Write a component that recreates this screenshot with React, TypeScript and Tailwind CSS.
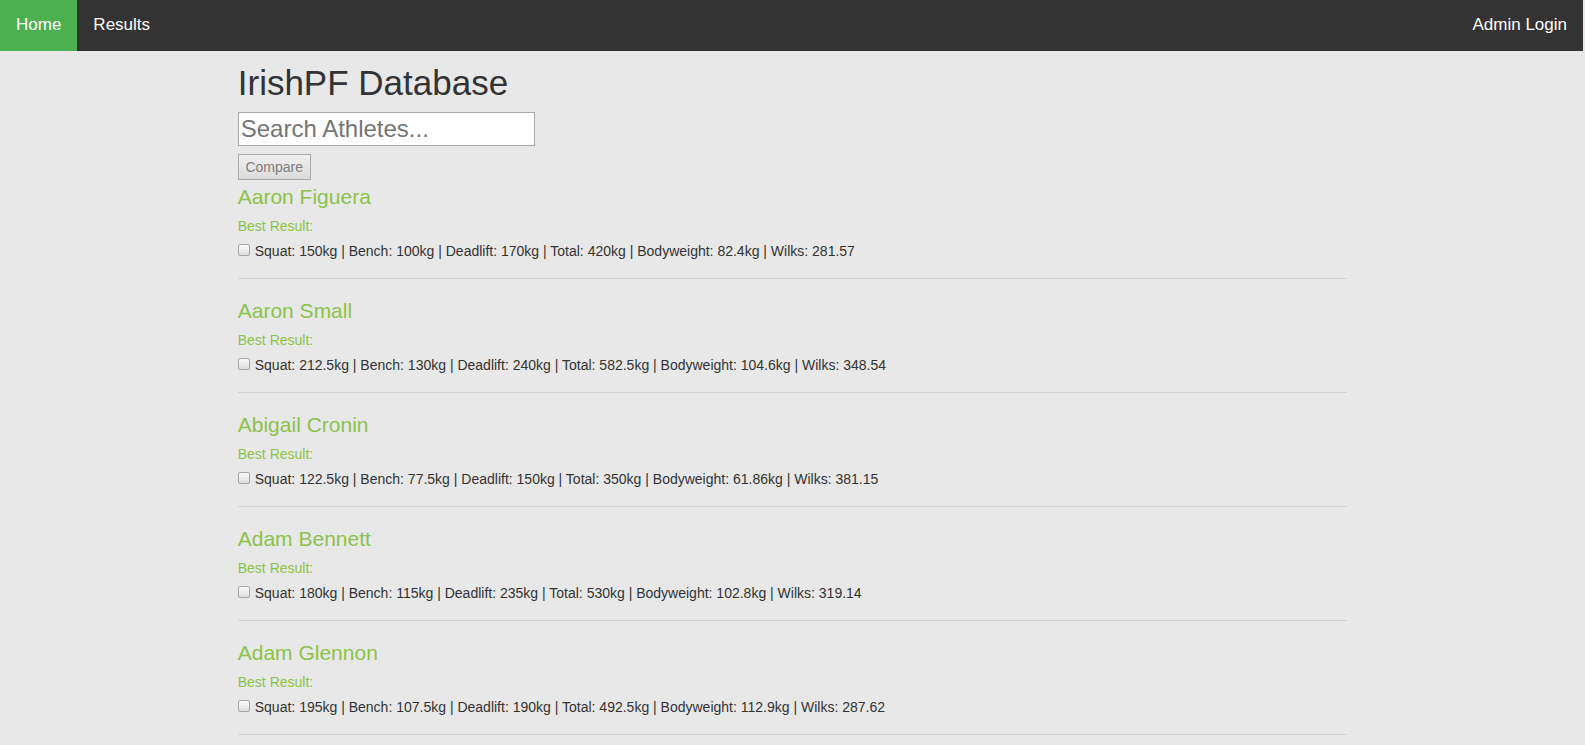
import { useState } from "react";

interface Athlete {
  name: string;
  squat: string;
  bench: string;
  deadlift: string;
  total: string;
  bodyweight: string;
  wilks: string;
}

const athletes: Athlete[] = [
  { name: "Aaron Figuera", squat: "150", bench: "100", deadlift: "170", total: "420", bodyweight: "82.4", wilks: "281.57" },
  { name: "Aaron Small", squat: "212.5", bench: "130", deadlift: "240", total: "582.5", bodyweight: "104.6", wilks: "348.54" },
  { name: "Abigail Cronin", squat: "122.5", bench: "77.5", deadlift: "150", total: "350", bodyweight: "61.86", wilks: "381.15" },
  { name: "Adam Bennett", squat: "180", bench: "115", deadlift: "235", total: "530", bodyweight: "102.8", wilks: "319.14" },
  { name: "Adam Glennon", squat: "195", bench: "107.5", deadlift: "190", total: "492.5", bodyweight: "112.9", wilks: "287.62" },
];

interface AthleteRowProps {
  athlete: Athlete;
  checked: boolean;
  onToggle: () => void;
}

const AthleteRow = ({ athlete, checked, onToggle }: AthleteRowProps) => {
  return (
    <div className="border-b border-[#d2d2d2] pt-[20px] pb-[17px] first:pt-[5px]">
      <h3 className="text-[21px] leading-[24px] text-[#8bc34a]">{athlete.name}</h3>
      <p className="mt-[7px] text-[14px] leading-[20px] text-[#8bc34a]">Best Result:</p>
      <div className="mt-[5px] flex items-start text-[14px] leading-[20px] text-[#333]">
        <input
          type="checkbox"
          checked={checked}
          onChange={onToggle}
          className="mt-[3px] mr-[5px] h-[12px] w-[12px] shrink-0 appearance-none rounded-[2px] border border-[#a6a6a6] bg-linear-to-b from-[#fafafa] to-[#dedede] checked:bg-[#8bc34a]"
        />
        <span>
          Squat: {athlete.squat}kg | Bench: {athlete.bench}kg | Deadlift: {athlete.deadlift}kg | Total:{" "}
          {athlete.total}kg | Bodyweight: {athlete.bodyweight}kg | Wilks: {athlete.wilks}
        </span>
      </div>
    </div>
  );
};

const App = () => {
  const [search, setSearch] = useState<string>("");
  const [selected, setSelected] = useState<string[]>([]);

  const toggle = (name: string) => {
    setSelected((prev) => (prev.includes(name) ? prev.filter((n) => n !== name) : [...prev, name]));
  };

  const filtered = athletes.filter((a) => a.name.toLowerCase().includes(search.toLowerCase()));

  return (
    <div className="min-h-screen bg-[#e8e8e8] font-['Liberation_Sans',Arial,sans-serif]">
      <nav className="mr-[2px] flex h-[51px] bg-[#333]">
        <a href="#" className="block bg-[#4caf50] px-4 pt-[15px] text-[17px] leading-[20px] text-white">
          Home
        </a>
        <a href="#" className="block px-4 pt-[15px] text-[17px] leading-[20px] text-white">
          Results
        </a>
        <a href="#" className="ml-auto block px-4 pt-[15px] text-[17px] leading-[20px] text-white">
          Admin Login
        </a>
      </nav>

      <main className="mx-auto w-[70%]">
        <h1 className="pt-[12px] text-[35px] leading-[40px] text-[#333]">IrishPF Database</h1>
        <input
          type="text"
          value={search}
          onChange={(e) => setSearch(e.target.value)}
          placeholder="Search Athletes..."
          className="mt-[9px] block h-[34px] w-[297px] border border-[#a9a9a9] bg-white px-[2px] text-[24px] text-[#333] outline-none placeholder:text-[#757575]"
        />
        <button
          type="button"
          className="mt-[8px] block h-[26px] w-[73px] border border-[#a9a9a9] bg-linear-to-b from-[#f0f0f0] to-[#dcdcdc] text-[14px] text-[#7d7d7d]"
        >
          Compare
        </button>
        <div>
          {filtered.map((athlete) => (
            <AthleteRow
              key={athlete.name}
              athlete={athlete}
              checked={selected.includes(athlete.name)}
              onToggle={() => toggle(athlete.name)}
            />
          ))}
        </div>
      </main>
    </div>
  );
};

export default App;
